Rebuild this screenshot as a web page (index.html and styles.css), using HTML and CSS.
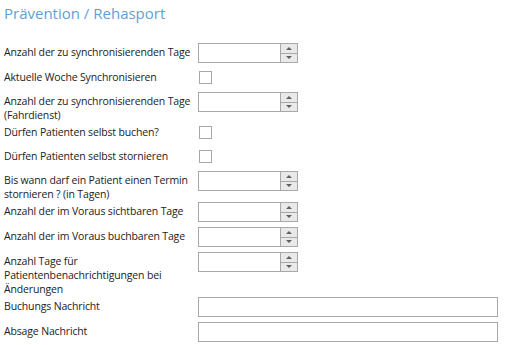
FILE: index.html
```html
<!DOCTYPE html>
<html lang="de">
<head>
  <meta charset="utf-8">
  <title>Prävention / Rehasport</title>
  <link rel="stylesheet" href="styles.css">
</head>
<body>
  <div class="full_page">
    <h2 class="title">Prävention / Rehasport</h2>

    <div class="form">
      <div class="row">
        <label class="lbl">Anzahl der zu synchronisierenden Tage</label>
        <div class="spin"><input class="spin_input" type="text"><div class="spin_btns"><span class="up"></span><span class="down"></span></div></div>
      </div>
      <div class="row">
        <label class="lbl">Aktuelle Woche Synchronisieren</label>
        <div class="check_cell"><input class="check" type="checkbox"></div>
      </div>
      <div class="row">
        <label class="lbl">Anzahl der zu synchronisierenden Tage (Fahrdienst)</label>
        <div class="spin"><input class="spin_input" type="text"><div class="spin_btns"><span class="up"></span><span class="down"></span></div></div>
      </div>
      <div class="row">
        <label class="lbl">Dürfen Patienten selbst buchen?</label>
        <div class="check_cell"><input class="check" type="checkbox"></div>
      </div>
      <div class="row">
        <label class="lbl">Dürfen Patienten selbst stornieren</label>
        <div class="check_cell"><input class="check" type="checkbox"></div>
      </div>
      <div class="row">
        <label class="lbl">Bis wann darf ein Patient einen Termin stornieren ? (in Tagen)</label>
        <div class="spin"><input class="spin_input" type="text"><div class="spin_btns"><span class="up"></span><span class="down"></span></div></div>
      </div>
      <div class="row">
        <label class="lbl">Anzahl der im Voraus sichtbaren Tage</label>
        <div class="spin"><input class="spin_input" type="text"><div class="spin_btns"><span class="up"></span><span class="down"></span></div></div>
      </div>
      <div class="row">
        <label class="lbl">Anzahl der im Voraus buchbaren Tage</label>
        <div class="spin"><input class="spin_input" type="text"><div class="spin_btns"><span class="up"></span><span class="down"></span></div></div>
      </div>
      <div class="row">
        <label class="lbl">Anzahl Tage für Patientenbenachrichtigungen bei Änderungen</label>
        <div class="spin"><input class="spin_input" type="text"><div class="spin_btns"><span class="up"></span><span class="down"></span></div></div>
      </div>
      <div class="row">
        <label class="lbl">Buchungs Nachricht</label>
        <input class="text_input" type="text">
      </div>
      <div class="row">
        <label class="lbl">Absage Nachricht</label>
        <input class="text_input" type="text">
      </div>
    </div>
  </div>
</body>
</html>
```

FILE: styles.css
```css
body{
  margin: 0;
  background-color: #ffffff;
  font-family: "Open Sans", "Noto Sans", sans-serif;
  color: #222222;
}

.full_page{
  padding: 0 4px;
}

.title{
  margin: 0;
  padding-top: 2px;
  height: 41px;
  font-size: 15px;
  line-height: 22px;
  font-weight: normal;
  color: #5f9fd6;
}

.row{
  display: flex;
  align-items: flex-start;
}

.lbl{
  width: 192px;
  margin-right: 2px;
  padding: 2px 0 1px 0;
  font-size: 10.5px;
  line-height: 14px;
  letter-spacing: -0.15px;
}

.spin{
  display: flex;
  width: 98px;
  height: 18px;
  border: 1px solid #a8a8a8;
  margin-bottom: 5px;
  background-color: #ffffff;
}

.spin_input{
  flex: 1;
  min-width: 0;
  border: none;
  padding: 0 3px;
  outline: none;
  font: inherit;
  font-size: 11px;
}

.spin_btns{
  display: flex;
  flex-direction: column;
  width: 16px;
  border-left: 1px solid #a8a8a8;
}

.up,
.down{
  flex: 1;
  display: flex;
  align-items: center;
  justify-content: center;
  background-color: #e9e9e9;
}

.up{
  border-bottom: 1px solid #a8a8a8;
}

.up::after{
  content: "";
  border-left: 3px solid transparent;
  border-right: 3px solid transparent;
  border-bottom: 3px solid #606060;
}

.down::after{
  content: "";
  border-left: 3px solid transparent;
  border-right: 3px solid transparent;
  border-top: 3px solid #606060;
}

.check_cell{
  height: 20px;
  margin-bottom: 4px;
  padding-left: 1px;
}

.check{
  appearance: none;
  display: block;
  width: 13px;
  height: 13px;
  margin: 3px 0 0 0;
  border: 1px solid #a8a8a8;
  background-color: #ffffff;
}

.text_input{
  margin: 0 0 5px 0;
  padding: 0 3px;
  box-sizing: border-box;
  width: 300px;
  height: 20px;
  border: 1px solid #a8a8a8;
  outline: none;
  font: inherit;
  font-size: 11px;
}
```
